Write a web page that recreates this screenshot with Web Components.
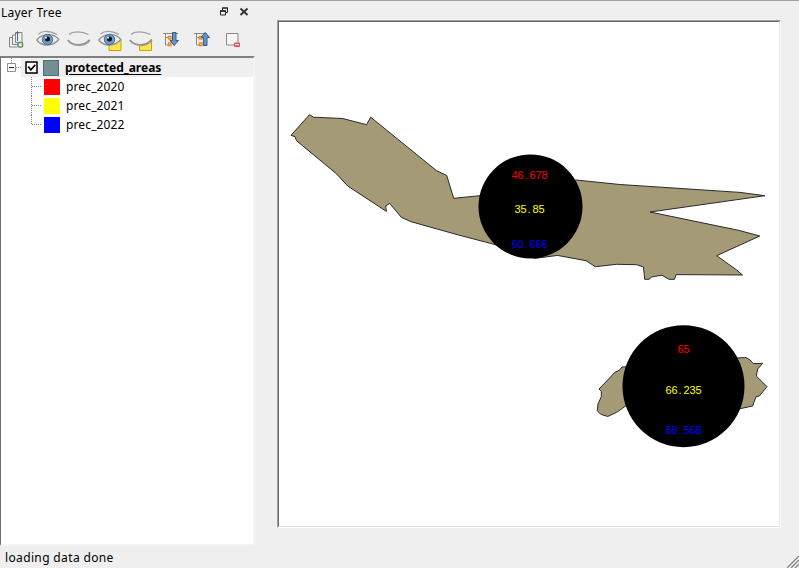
<!DOCTYPE html>
<html lang="en">
<head>
<meta charset="utf-8">
<title>Layer Tree</title>
<style>
html,body{margin:0;height:100%;overflow:hidden;background:#efefef}
</style>
</head>
<body>
<map-window></map-window>
<script>
const define = (name, html) => customElements.define(name, class extends HTMLElement {
  constructor() {
    super();
    const t = document.createElement('template');
    t.innerHTML = html;
    this.attachShadow({mode: 'open'}).append(t.content.cloneNode(true));
  }
});

define('dock-title', `
<style>
:host{display:flex;align-items:center;height:21px;padding:0 6px 0 1px;box-sizing:border-box}
span{flex:1;line-height:21px;padding-top:2px;letter-spacing:.24px}
svg{display:block;margin-left:10px}
</style>
<span><slot></slot></span>
<svg width="10" height="10" viewBox="0 0 10 10" fill="none" stroke="#222"><path d="M3.500 3V1h5v4.500H6.500M3 1h6" /><path d="M1.500 4h5v4h-5z"/><path d="M1 4h6" stroke-width="1.500"/></svg>
<svg width="10" height="10" viewBox="0 0 10 10" fill="none" stroke="#333" stroke-width="2"><path d="M1.500 1.500l7 6.500M8.500 1.500l-7 6.500"/></svg>
`);

const EYE = '<path d="M2.500 5C7 1.500 14 2 21 5.500" stroke="#a0a0a0" stroke-width="1.200"/><path d="M.8 11C6 4.500 17 3.500 22.800 10.500C17 17.500 6 18 .8 11z" fill="#f1f1ef" stroke="#929292" stroke-width="1.300"/><circle cx="11.500" cy="10.500" r="5.200" fill="#6c9bcb" stroke="#466b98"/><circle cx="11.500" cy="10" r="2.500" fill="#10151c" stroke="none"/><circle cx="10" cy="8.800" r="1" fill="#e6f0fa" stroke="none"/>';
const LID = '<path d="M2 5.500C6 2 15 2 21.500 5.500" stroke="#a0a0a0" stroke-width="1.200"/><path d="M.8 11C6 17.500 17 17.500 22.800 11" stroke="#929292" stroke-width="2"/><path d="M3.500 13l-1 1.500M7.500 15l-.5 1.500M11.800 15.500v1.700M16 15l.5 1.500M20 13l1 1.500" stroke="#aaa"/>';
const ICONS = {
  add: '<path d="M7 8.500H4.500v9.500H12" stroke="#858585"/><path d="M10 6H7.500v9.500H13" stroke="#858585"/><path d="M13 13.500H10.500V3.500h6.500V13" stroke="#858585"/><path d="M12.500 12V3M10.500 5l2-2.500 1.500 2" stroke="#49678d"/><rect x="13" y="13.500" width="4.500" height="4.500" rx="1" fill="#edf7ee" stroke="#588e66" stroke-width="1.500"/>',
  eye: EYE,
  lid: LID,
  'eye-note': '<path d="M11 10.500h12v11h-12z" fill="#fbe64f" stroke="#c9a20c"/>' + EYE,
  'lid-note': '<path d="M22.500 10v11.500h-12V17q8-1 12-7z" fill="#fbe64f" stroke="#c9a20c"/>' + LID,
  expand: '<path d="M3 4.500h15M5.500 4v12h4M5.500 8.500h4" stroke="#888"/><path d="M8.500 7.500h2.500v2.500H8.500zM8.500 14h2.500v2.500H8.500z" fill="#fff2cf" stroke="#ef8614" stroke-width="1.300"/><path d="M12.500 3.500h3.500v8h2.500l-4.300 5-4.200-5h2.500z" fill="#6693c4" stroke="#345b85"/>',
  collapse: '<path d="M3 4.500h13M5.500 4v12h4M5.500 8.500h4" stroke="#888"/><path d="M8.500 7.500h2.500v2.500H8.500zM8.500 14h2.500v2.500H8.500z" fill="#fff2cf" stroke="#ef8614" stroke-width="1.300"/><path d="M12.500 16.500h3.500v-8h2.500l-4.300-5-4.200 5h2.500z" fill="#6693c4" stroke="#345b85"/>',
  remove: '<path d="M4.500 4.500h11.500v11.500H4.500z" stroke="#8a8a85" fill="#f5f5f4"/><rect x="12" y="13.500" width="6" height="4.500" rx="1" fill="#e84b5b"/><path d="M13 15.700h4" stroke="#fff"/>'
};
customElements.define('tool-icon', class extends HTMLElement {
  connectedCallback() {
    this.attachShadow({mode: 'open'}).innerHTML =
      `<style>:host{display:block;width:24px;height:24px}svg{display:block;overflow:visible}</style>
       <svg width="24" height="24" viewBox="0 0 24 24" fill="none">${ICONS[this.getAttribute('name')]}</svg>`;
  }
});

define('tool-bar', `
<style>:host{display:flex;height:34px;gap:7px;padding:7px 0 0 5px;box-sizing:border-box;align-items:flex-start}</style>
<tool-icon name="add"></tool-icon><tool-icon name="eye"></tool-icon><tool-icon name="lid"></tool-icon><tool-icon name="eye-note"></tool-icon><tool-icon name="lid-note"></tool-icon><tool-icon name="expand"></tool-icon><tool-icon name="collapse"></tool-icon><tool-icon name="remove"></tool-icon>
`);

define('tree-group', `
<style>
:host{display:grid;grid-template-columns:20px 1fr;height:19px}
svg{display:block}
div{background:#efefef;display:flex;align-items:center}
.box{margin-left:4px}
.swatch{width:14px;height:14px;border:1px solid #4d6d78;background:#728f91;margin:0 6px 0 5px}
b{line-height:19px;text-decoration:underline;text-decoration-thickness:1px;text-underline-offset:2px}
</style>
<svg width="20" height="19" fill="none" stroke="#909090"><path d="M10.500 0v5" stroke-dasharray="1 1"/><path d="M15 9.500h5" stroke-dasharray="1 1"/><path d="M6.500 5.500h8v8h-8z"/><path d="M8 9.500h5" stroke="#222"/></svg>
<div><svg class="box" width="13" height="13" fill="none" stroke="#000"><path d="M1 1h11v11H1z" fill="#fff" stroke-width="1.500"/><path d="M3.300 5.500l2.500 3.300 4.500-5" stroke-width="1.700"/></svg><span class="swatch"></span><b><slot></slot></b></div>
`);

customElements.define('tree-class', class extends HTMLElement {
  connectedCallback() {
    const end = this.hasAttribute('last') ? 10 : 19;
    this.attachShadow({mode: 'open'}).innerHTML = `
<style>
:host{display:flex;align-items:center;height:19px;padding-left:30px;line-height:19px;letter-spacing:.13px}
i{width:16px;height:16px;background:${this.getAttribute('color')};margin:0 6px 0 1px}
svg{display:block}
</style>
<svg width="12" height="19" fill="none" stroke="#808080" stroke-dasharray="1 1"><path d="M.5 0v${end}M1 9.500h10"/></svg><i></i><slot></slot>`;
  }
});

define('layer-tree', `
<style>
:host{display:block;box-sizing:border-box;width:255px;height:490px;background:#fff;border:solid;border-width:2px 2px 2px 1px;border-color:#808080 #f4f4f4 #f4f4f4 #707070}
</style>
<tree-group>protected_areas</tree-group>
<tree-class color="#f00">prec_2020</tree-class>
<tree-class color="#ff0">prec_2021</tree-class>
<tree-class color="#00f" last>prec_2022</tree-class>
`);

define('map-canvas', `
<style>
:host{display:block;box-sizing:border-box;width:504px;height:508px;background:#fff;border:1px solid;border-color:#a0a0a0 #fff #fff #a0a0a0}
div{box-sizing:border-box;height:506px;border:1px solid;border-color:#696969 #e3e3e3 #e3e3e3 #696969}
svg{display:block}
.land{fill:#a49a76;stroke:#29292b;stroke-width:1}
text{font:11px "Liberation Sans",sans-serif}
</style>
<div><svg width="500" height="504" viewBox="279 22 500 504">
<path class="land" d="M291 135.300L309.500 114.700 313.500 117.200 342.700 118.500 366.500 124.700 370.700 117.200 436.700 170.800 446.700 175.400 453.700 198.300 480 195.700 576 180 620 184.500 740 192.400 765 195.700 650 212 738.500 230.300 759.800 236 716.700 255.700 736.700 270 742.500 275 676 274.600 674.500 279.300H669L662 275.200 651.300 277 649.300 279.300H644.700L643.500 267 636.700 264.700 616.700 264.300 595.300 266.700 586 260.700 557.500 255.400 535 258.400 493 244 458.500 235 411 221.700 401.300 217.300 389.700 203.400 385.700 206 386.400 211.400 347.700 186 336.700 174 296.500 140.700 295 136.700z"/>
<path class="land" d="M630 366.700L622 367 619.300 370.300 615 372.300 599 389 601.300 391.500V396.700L598 404 597.300 410.700 600.700 414.300 607.700 416.500 616.700 412.300 626 405.700 740 408.700 752.700 406 756 396.700 759.300 396 767 386.700 756.300 376 757.700 369 762.700 363.300 753.300 363.700 750 360 746 357.500 736.700 358z"/>
<circle cx="530.500" cy="206.400" r="52"/><circle cx="683.500" cy="386.200" r="61"/>
<g fill="#f00"><text x="511.500 517.500 524.500 529.500 535.500 541.500" y="179">46.678</text><text x="677.500 683.500" y="353">65</text></g>
<g fill="#ff0"><text x="514.500 520.500 527.500 532.500 538.500" y="213">35.85</text><text x="665.500 671.500 678.500 683.500 689.500 695.500" y="394">66.235</text></g>
<g fill="#00f"><text x="511.500 517.500 524.500 529.500 535.500 541.500" y="248">60.666</text><text x="665.500 671.500 678.500 683.500 689.500 695.500" y="434">88.568</text></g>
</svg></div>
`);

define('status-bar', `
<style>
:host{display:flex;justify-content:space-between;align-items:flex-end;height:22px;padding-left:5px}
span{line-height:20px;letter-spacing:.36px}
svg{display:block}
</style>
<span><slot></slot></span>
<svg width="12" height="12" fill="none"><path d="M0 12L12 0M4 12L12 4M8 12L12 8" stroke="#8c8c8c" stroke-width="1.500"/><path d="M2 12L12 2M6 12L12 6" stroke="#fff" stroke-width=".7"/></svg>
`);

define('map-window', `
<style>
:host{display:grid;grid-template:545px 22px/277px 1fr;width:799px;height:568px;box-sizing:border-box;border-top:1px solid #a0a0a0;background:#efefef;color:#000;font:12px "Noto Sans","Open Sans",sans-serif}
aside{width:255px}
main{padding-top:19px}
status-bar{grid-column:1/3}
</style>
<aside><dock-title>Layer Tree</dock-title><tool-bar></tool-bar><layer-tree></layer-tree></aside>
<main><map-canvas></map-canvas></main>
<status-bar>loading data done</status-bar>
`);
</script>
</body>
</html>
